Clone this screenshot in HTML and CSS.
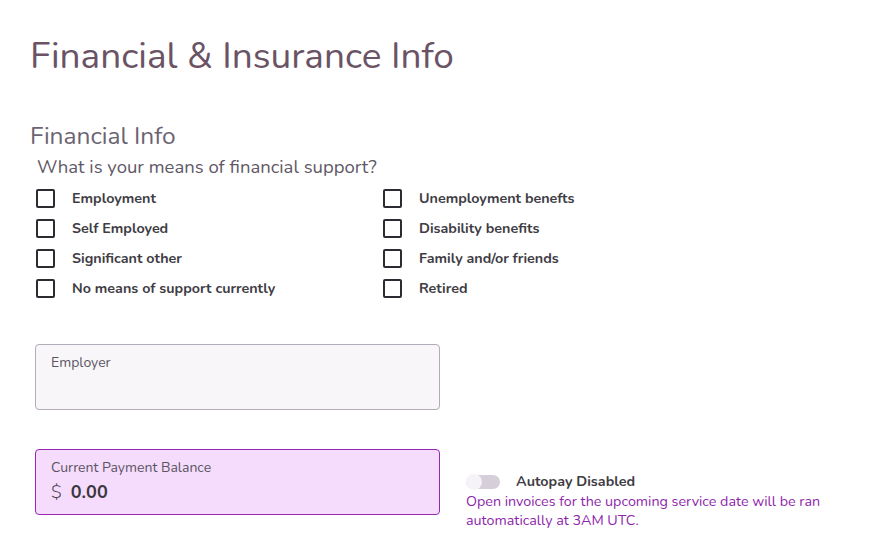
FILE: index.html
```html
<!DOCTYPE html>
<html>
<head>
<meta charset="utf-8">
<link rel="stylesheet" href="styles.css">
</head>
<body>
<div class="page">
  <h1 class="title">Financial &amp; Insurance Info</h1>
  <h2 class="section">Financial Info</h2>
  <p class="question">What is your means of financial support?</p>
  <div class="options">
    <label class="opt"><span class="box"></span>Employment</label>
    <label class="opt"><span class="box"></span>Unemployment benefts</label>
    <label class="opt"><span class="box"></span>Self Employed</label>
    <label class="opt"><span class="box"></span>Disability benefits</label>
    <label class="opt"><span class="box"></span>Significant other</label>
    <label class="opt"><span class="box"></span>Family and/or friends</label>
    <label class="opt"><span class="box"></span>No means of support currently</label>
    <label class="opt"><span class="box"></span>Retired</label>
  </div>
  <div class="field employer">
    <div class="flabel">Employer</div>
  </div>
  <div class="row">
    <div class="field balance">
      <div class="flabel">Current Payment Balance</div>
      <div class="value"><span class="cur">$</span><span class="amt">0.00</span></div>
    </div>
    <div class="autopay">
      <div class="toggle-row">
        <span class="toggle"><span class="thumb"></span></span>
        <span class="tlabel">Autopay Disabled</span>
      </div>
      <div class="note">Open invoices for the upcoming service date will be ran automatically at 3AM UTC.</div>
    </div>
  </div>
</div>
</body>
</html>
```
FILE: styles.css
```css
html, body {
  margin: 0;
  padding: 0;
  background: #ffffff;
  font-family: "Nunito", "Lato", "Noto Sans", sans-serif;
}
.page {
  padding: 32px 30px 0 30px;
}
.title {
  margin: 0;
  font-size: 37px;
  line-height: 48px;
  font-weight: 400;
  color: #6a5365;
}
.section {
  margin: 41px 0 0 0;
  font-size: 24.5px;
  line-height: 30px;
  font-weight: 400;
  color: #6c6472;
}
.question {
  margin: 3px 0 0 7px;
  font-size: 18.5px;
  line-height: 26px;
  color: #5f5866;
}
.options {
  margin: 3px 0 0 6px;
  display: grid;
  grid-template-columns: 347px 300px;
  grid-auto-rows: 30px;
}
.opt {
  display: flex;
  align-items: center;
  font-size: 14.3px;
  font-weight: 700;
  color: #403c44;
}
.box {
  width: 15px;
  height: 15px;
  border: 2px solid #2e2a31;
  border-radius: 2px;
  margin-right: 17px;
}
.field {
  box-sizing: border-box;
  width: 405px;
  height: 66px;
  border-radius: 4px;
  margin-left: 5px;
  padding: 9px 15px 0 15px;
}
.employer {
  margin-top: 41px;
  background: #f8f6f9;
  border: 1px solid #b3abb8;
}
.flabel {
  font-size: 14px;
  line-height: 18px;
  color: #5a5461;
}
.row {
  display: flex;
  align-items: flex-start;
  margin-top: 39px;
}
.balance {
  background: #f5dcfd;
  border: 1px solid #9a27b4;
}
.value {
  display: flex;
  align-items: baseline;
  margin-top: 3px;
  color: #3a3640;
}
.cur {
  font-size: 18px;
  font-weight: 300;
  color: #4b4552;
  margin-right: 9px;
}
.amt {
  font-size: 18px;
  font-weight: 700;
}
.autopay {
  margin: 23px 0 0 26px;
}
.toggle-row {
  display: flex;
  align-items: center;
}
.toggle {
  position: relative;
  width: 34px;
  height: 14px;
  border-radius: 7px;
  background: #d6cfd9;
  margin-right: 16px;
}
.thumb {
  position: absolute;
  left: 0;
  top: -1px;
  width: 16px;
  height: 16px;
  border-radius: 50%;
  background: #f6f3f8;
}
.tlabel {
  font-size: 14.3px;
  font-weight: 700;
  color: #403c44;
  line-height: 20px;
}
.note {
  margin-top: 0;
  width: 380px;
  font-size: 14.3px;
  line-height: 19px;
  color: #8e25ab;
}
```
